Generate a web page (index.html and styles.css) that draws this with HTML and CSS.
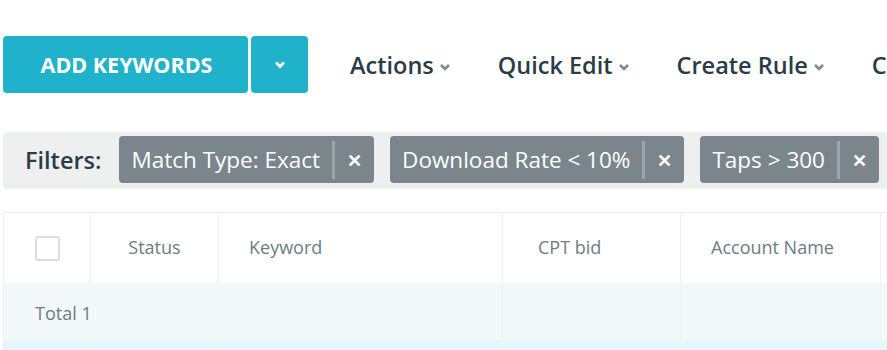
FILE: index.html
```html
<!DOCTYPE html>
<html lang="en">
<head>
    <meta charset="UTF-8">
    <title>Keywords</title>
    <link rel="stylesheet" href="styles.css">
</head>
<body>
    <div class="page">
        <div class="toolbar">
            <div class="add-group">
                <button class="add-btn">ADD KEYWORDS</button>
                <button class="add-caret">
                    <svg width="12" height="9" viewBox="0 0 12 9"><path d="M2 2.5 L6 6.5 L10 2.5" fill="none" stroke="white" stroke-width="2.8"/></svg>
                </button>
            </div>
            <div class="menu">
                <span class="menu-item">Actions<svg class="chev" width="12" height="8" viewBox="0 0 12 8"><path d="M2 2 L6 6 L10 2" fill="none" stroke="currentColor" stroke-width="2.6"/></svg></span>
                <span class="menu-item">Quick Edit<svg class="chev" width="12" height="8" viewBox="0 0 12 8"><path d="M2 2 L6 6 L10 2" fill="none" stroke="currentColor" stroke-width="2.6"/></svg></span>
                <span class="menu-item">Create Rule<svg class="chev" width="12" height="8" viewBox="0 0 12 8"><path d="M2 2 L6 6 L10 2" fill="none" stroke="currentColor" stroke-width="2.6"/></svg></span>
                <span class="menu-item">Columns<svg class="chev" width="12" height="8" viewBox="0 0 12 8"><path d="M2 2 L6 6 L10 2" fill="none" stroke="currentColor" stroke-width="2.6"/></svg></span>
            </div>
        </div>

        <div class="filters">
            <span class="filters-label">Filters:</span>
            <span class="chip"><span class="chip-text">Match Type: Exact</span><span class="chip-close">✕</span></span>
            <span class="chip"><span class="chip-text">Download Rate &lt; 10%</span><span class="chip-close">✕</span></span>
            <span class="chip"><span class="chip-text">Taps &gt; 300</span><span class="chip-close">✕</span></span>
        </div>

        <table class="grid">
            <colgroup>
                <col style="width: 87px">
                <col style="width: 128px">
                <col style="width: 284px">
                <col style="width: 178px">
                <col style="width: 200px">
                <col style="width: 120px">
            </colgroup>
            <thead>
                <tr>
                    <th class="check-cell"><span class="checkbox"></span></th>
                    <th class="center">Status</th>
                    <th class="pad-31">Keyword</th>
                    <th class="pad-36">CPT bid</th>
                    <th class="pad-31">Account Name</th>
                    <th></th>
                </tr>
            </thead>
            <tbody>
                <tr class="total-row">
                    <td colspan="3" class="total-label">Total 1</td>
                    <td></td>
                    <td></td>
                    <td></td>
                </tr>
                <tr class="data-row">
                    <td></td><td></td><td></td><td></td><td></td><td></td>
                </tr>
            </tbody>
        </table>
    </div>
</body>
</html>
```

FILE: styles.css
```css
html, body {
    margin: 0;
    height: 100%;
    overflow: hidden;
}
body {
    font-family: "Open Sans", sans-serif;
    background: white;
    color: #2b3c46;
}

.page {
    padding: 36px 0 0 3px;
    width: 1100px;
}

.toolbar {
    display: flex;
    align-items: center;
    height: 57px;
}

.add-group {
    display: flex;
    gap: 3px;
}

button {
    border: none;
    background-color: #20b2cb;
    color: white;
    border-radius: 4px;
    height: 57px;
    font-family: inherit;
    cursor: pointer;
}

.add-btn {
    width: 245px;
    font-size: 21.5px;
    font-weight: 700;
    padding: 0 0 0 2px;
}

.add-caret {
    width: 57px;
    display: flex;
    align-items: center;
    justify-content: center;
}

.menu {
    display: flex;
    gap: 47px;
    margin-left: 42px;
}

.menu-item {
    font-size: 23.5px;
    font-weight: 600;
    color: #2b3c46;
    display: flex;
    align-items: center;
    white-space: nowrap;
}

.chev {
    color: #7d8a92;
    margin-left: 5px;
    margin-top: 4px;
}

.filters {
    margin-top: 39px;
    height: 57px;
    background: #eef0f0;
    border-radius: 4px;
    display: flex;
    align-items: center;
    gap: 16px;
    padding-left: 22px;
    padding-bottom: 2px;
    box-sizing: border-box;
    white-space: nowrap;
}

.filters-label {
    font-size: 23.5px;
    font-weight: 600;
    color: #2b3c46;
    margin-right: 2px;
}

.chip {
    display: flex;
    align-items: center;
    height: 47px;
    background: #7a868c;
    border-radius: 4px;
    color: white;
    font-size: 22.5px;
    padding-left: 12px;
}

.chip-text {
    padding-right: 12px;
    border-right: 3px solid #9aa4a9;
    line-height: 38px;
}

.chip-close {
    width: 39px;
    text-align: center;
    font-size: 18px;
    font-weight: 700;
}

.grid {
    margin-top: 23px;
    border-collapse: collapse;
    table-layout: fixed;
    font-size: 18px;
    color: #6d7c85;
}

.grid th {
    font-weight: 400;
    height: 67px;
    text-align: left;
    border-top: 1px solid #eceeef;
    border-left: 1px solid #eef0f1;
    padding: 0 0 3px 0;
}

.grid th.center {
    text-align: center;
}

.grid th.pad-31 {
    padding-left: 30px;
}

.grid th.pad-36 {
    padding-left: 35px;
}

.grid .check-cell {
    padding: 2px 0 1px 31px;
}

.checkbox {
    display: block;
    width: 21px;
    height: 21px;
    border: 2px solid #d9dee0;
    border-radius: 3px;
    background: white;
}

.grid td {
    border-left: 1px solid #eef2f3;
    padding: 0;
}

.total-row td {
    background: #f3f9fa;
    height: 52px;
    padding-top: 4px;
    padding-bottom: 1px;
}

.total-label {
    padding-left: 31px !important;
}

.data-row td {
    background: #e8f5fa;
    height: 40px;
}
```
